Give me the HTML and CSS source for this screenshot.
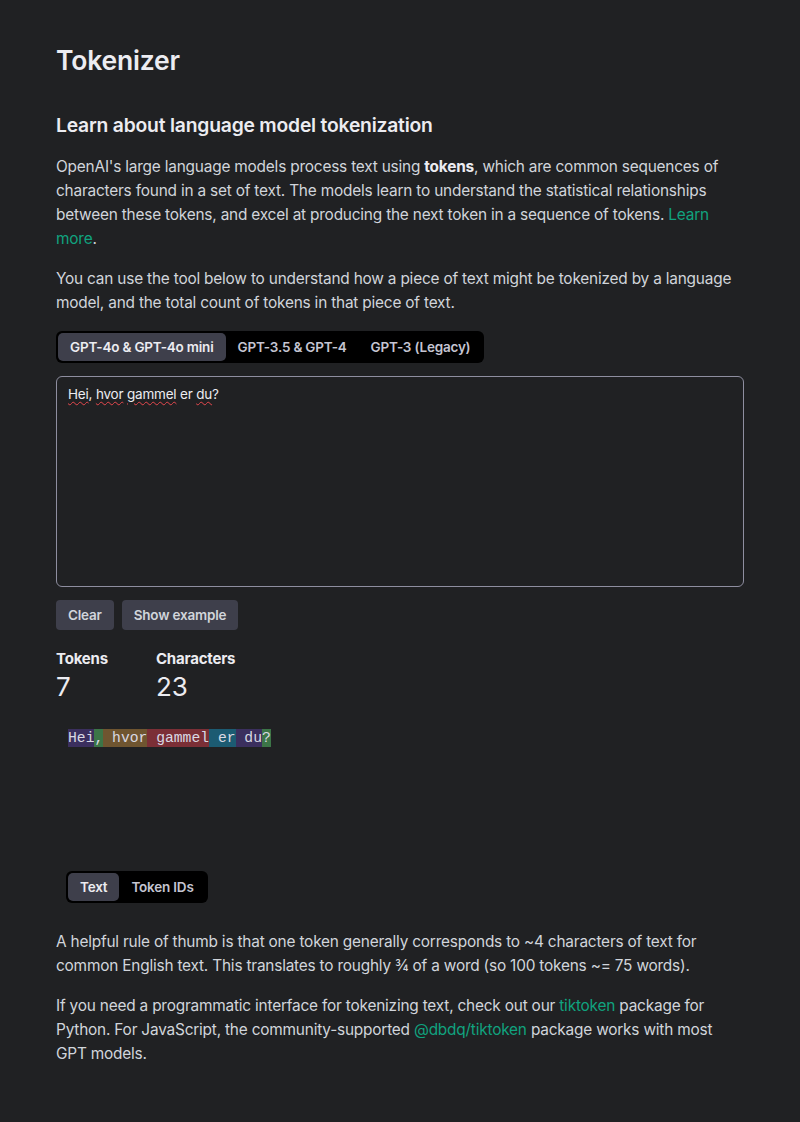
FILE: index.html
```html
<!DOCTYPE html>
<html lang="en">
<head>
<meta charset="utf-8">
<title>Tokenizer</title>
<link rel="stylesheet" href="styles.css">
</head>
<body>
<main class="page">
  <h1 class="title">Tokenizer</h1>
  <h2 class="subtitle">Learn about language model tokenization</h2>
  <p class="para">OpenAI's large language models process text using <strong>tokens</strong>, which are common sequences of characters found in a set of text. The models learn to understand the statistical relationships between these tokens, and excel at producing the next token in a sequence of tokens. <a class="link" href="#">Learn more</a>.</p>
  <p class="para">You can use the tool below to understand how a piece of text might be tokenized by a language model, and the total count of tokens in that piece of text.</p>

  <div class="seg seg-models">
    <button class="seg-btn active">GPT-4o &amp; GPT-4o mini</button>
    <button class="seg-btn">GPT-3.5 &amp; GPT-4</button>
    <button class="seg-btn">GPT-3 (Legacy)</button>
  </div>

  <div class="input-box"><span class="sp">Hei</span>, <span class="sp">hvor</span> <span class="sp">gammel</span> er <span class="sp">du</span>?</div>

  <div class="actions">
    <button class="btn">Clear</button>
    <button class="btn">Show example</button>
  </div>

  <div class="stats">
    <div class="stat">
      <div class="stat-label">Tokens</div>
      <div class="stat-value">7</div>
    </div>
    <div class="stat">
      <div class="stat-label">Characters</div>
      <div class="stat-value">23</div>
    </div>
  </div>

  <div class="tokens"><span class="t t1">Hei</span><span class="t t2">,</span><span class="t t3"> hvor</span><span class="t t4"> gammel</span><span class="t t5"> er</span><span class="t t1"> du</span><span class="t t2">?</span></div>

  <div class="view-toggle">
    <div class="seg">
      <button class="seg-btn active">Text</button>
      <button class="seg-btn">Token IDs</button>
    </div>
  </div>

  <p class="para">A helpful rule of thumb is that one token generally corresponds to ~4 characters of text for common English text. This translates to roughly ¾ of a word (so 100 tokens ~= 75 words).</p>
  <p class="para">If you need a programmatic interface for tokenizing text, check out our <a class="link" href="#">tiktoken</a> package for Python. For JavaScript, the community-supported <a class="link" href="#">@dbdq/tiktoken</a> package works with most GPT models.</p>
</main>
</body>
</html>
```
FILE: styles.css
```css
html, body {
  margin: 0;
  padding: 0;
  background: #202123;
}
body {
  font-family: Inter, "Noto Sans", "Liberation Sans", sans-serif;
  color: #ececf1;
}
.page {
  padding: 40px 56px 40px 56px;
}
.title {
  margin: 0;
  font-size: 26.5px;
  line-height: 40px;
  font-weight: 600;
  color: #ececf1;
  letter-spacing: -0.2px;
}
.subtitle {
  margin: 30px 0 0 0;
  font-size: 19.3px;
  line-height: 30px;
  font-weight: 600;
  color: #ececf1;
  letter-spacing: -0.2px;
}
.para {
  margin: 16px 0 0 0;
  font-size: 15.4px;
  line-height: 24px;
  color: #d1d5db;
  letter-spacing: -0.2px;
}
.subtitle + .para {
  margin-top: 15px;
}
.para strong {
  font-weight: 700;
  color: #ececf1;
}
.link {
  color: #10a37f;
  text-decoration: none;
}
.seg {
  display: inline-flex;
  background: #000;
  border-radius: 6px;
  padding: 2px;
}
.seg-models {
  margin-top: 16px;
}
.seg-btn {
  font-family: inherit;
  font-size: 13.5px;
  font-weight: 600;
  line-height: 20px;
  color: #c5c5d2;
  background: transparent;
  border: 0;
  border-radius: 5px;
  padding: 4px 12px;
  margin: 0;
  letter-spacing: -0.2px;
}
.seg-btn.active {
  background: #3e3f4b;
  color: #ececf1;
}
.input-box {
  box-sizing: border-box;
  margin-top: 13px;
  height: 211px;
  border: 1px solid #8e8ea0;
  border-radius: 6px;
  padding: 7px 11px 12px;
  font-size: 13.5px;
  line-height: 20px;
  color: #ececf1;
  letter-spacing: -0.2px;
}
.sp {
  text-decoration: underline wavy #e5484d;
  text-decoration-thickness: 1px;
  text-underline-offset: 2px;
}
.actions {
  display: flex;
  gap: 8px;
  margin-top: 13px;
}
.btn {
  font-family: inherit;
  font-size: 13.5px;
  font-weight: 600;
  line-height: 20px;
  color: #d1d5db;
  background: #3e3f4b;
  border: 0;
  border-radius: 4px;
  padding: 5px 12px;
  letter-spacing: -0.2px;
}
.stats {
  display: flex;
  gap: 48px;
  margin-top: 19px;
}
.stat-label {
  font-size: 15px;
  font-weight: 700;
  line-height: 20px;
  color: #ececf1;
  letter-spacing: -0.2px;
}
.stat-value {
  font-size: 26px;
  line-height: 36px;
  font-weight: 400;
  color: #ececf1;
}
.tokens {
  padding: 24px 12px 0 12px;
  height: 142px;
  font-family: "Liberation Mono", "DejaVu Sans Mono", monospace;
  font-size: 14.7px;
  line-height: 18px;
  color: #d9d9e3;
  white-space: pre;
}
.t {
  display: inline-block;
  line-height: 18px;
}
.t1 { background: #3b2f5e; }
.t2 { background: #3c7547; }
.t3 { background: #6f5530; }
.t4 { background: #7b2f36; }
.t5 { background: #1c5b72; }
.view-toggle {
  padding: 0 10px;
}
.view-toggle + .para {
  margin-top: 27px;
}
```
